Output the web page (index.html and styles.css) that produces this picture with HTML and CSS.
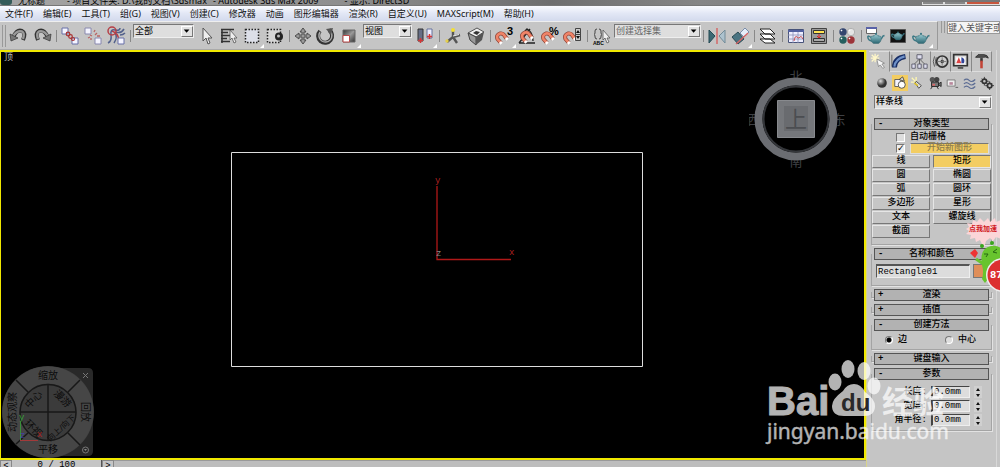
FILE: index.html
```html
<!DOCTYPE html>
<html lang="zh-CN">
<head>
<meta charset="utf-8">
<title>Autodesk 3ds Max 2009</title>
<link rel="stylesheet" href="styles.css">
</head>
<body>
<svg class="defs" width="0" height="0" aria-hidden="true">
  <defs>
    <linearGradient id="steel" x1="0" y1="0" x2="1" y2="1"><stop offset="0" stop-color="#333"/><stop offset=".5" stop-color="#999"/><stop offset="1" stop-color="#333"/></linearGradient>
    <linearGradient id="teal" x1="0" y1="0" x2="0" y2="1"><stop offset="0" stop-color="#8fc3ca"/><stop offset="1" stop-color="#2b6571"/></linearGradient>
    <radialGradient id="ball" cx=".35" cy=".3"><stop offset="0" stop-color="#ddd"/><stop offset="1" stop-color="#333"/></radialGradient>
    <symbol id="magnet" viewBox="0 0 14 14"><path d="M6 12L2.500 8Q1 4 5 2.500Q8 2 9 4L12 8" fill="none" stroke="#8c4033" stroke-width="4"/><path d="M6 12L2.500 8Q1 4 5 2.500Q8 2 9 4L12 8" fill="none" stroke="#f08468" stroke-width="2.600"/><path d="M5 11l1.500 1.700M11 7l1.500 1.700" stroke="#fff" stroke-width="3"/></symbol>
    <symbol id="teapot" viewBox="0 0 18 12"><path d="M4 5Q1 2.500 .8 4.500Q1 8 5 8.500M13 7Q15 6 16 3.500L17.500 3" fill="none" stroke="#3b7985" stroke-width="1.500"/><path d="M4 4Q9 1.500 14 4Q15 9 11.500 11H6.500Q3 9 4 4Z" fill="url(#teal)" stroke="#3b6973" stroke-width=".5"/><path d="M6 3.500Q9 1 12 3.500" fill="#a5d0d5" stroke="#3b6973" stroke-width=".5"/><circle cx="9" cy="1.300" r="1.100" fill="#3b7985"/></symbol>
    <symbol id="down" viewBox="0 0 12 11"><path d="M2 3h7L5.500 7z" fill="#000"/></symbol>
  </defs>
</svg>

<header class="titlebar">
  <span class="app-mark"></span>
  <span class="title-part">无标题</span>
  <span class="title-part path">- 项目文件夹: D:\我的文档\3dsmax</span>
  <span class="title-part">- Autodesk 3ds Max 2009</span>
  <span class="title-part device">- 显示: Direct3D</span>
  <span class="window-buttons"><i></i><i></i><i class="close"></i></span>
</header>

<nav class="menu">
  <a href="#">文件(F)</a><a href="#">编辑(E)</a><a href="#">工具(T)</a><a href="#">组(G)</a><a href="#">视图(V)</a><a href="#">创建(C)</a><a href="#">修改器</a><a href="#">动画</a><a href="#">图形编辑器</a><a href="#">渲染(R)</a><a href="#">自定义(U)</a><a href="#">MAXScript(M)</a><a href="#">帮助(H)</a>
</nav>

<div class="top">
  <div class="toolbar">
    <span class="grip"></span>
    <button aria-label="撤消"><svg viewBox="0 0 20 20"><path d="M4 12Q7 3 13 5Q17 7 14 14" fill="none" stroke="#333" stroke-width="4"/><path d="M4 11Q7 4 13 5.500Q16 7 14 13" fill="none" stroke="#999" stroke-width="2.400"/><path d="M1 8l1 7 7-3z" fill="#777" stroke="#333" stroke-width=".7"/></svg></button>
    <button aria-label="重做"><svg viewBox="0 0 20 20"><path d="M16 12Q13 3 7 5Q3 7 6 14" fill="none" stroke="#333" stroke-width="4"/><path d="M16 11Q13 4 7 5.500Q4 7 6 13" fill="none" stroke="#999" stroke-width="2.400"/><path d="M19 8l-1 7-7-3z" fill="#777" stroke="#333" stroke-width=".7"/></svg></button>
    <span class="sep"></span>
    <button aria-label="选择并链接"><svg viewBox="0 0 20 20"><path d="M2 2h6v6H2zM12 12h6v6h-6z" fill="#f4f4ff" stroke="#6870a8"/><g fill="none" stroke="#a83232" stroke-width="1.200"><circle cx="8" cy="8" r="1.800"/><circle cx="10.500" cy="10.500" r="1.800"/><circle cx="13" cy="13" r="1.500"/></g></svg></button>
    <button aria-label="取消链接"><svg viewBox="0 0 20 20"><path d="M2 2h6v6H2zM12 12h6v6h-6z" fill="#f4f4ff" stroke="#8888ae"/><path d="M7 9l2 1M5 12l2-1M8 14v-2M12 9l2-2M11 6l1-2M14 10h3" stroke="#b86464" stroke-width="1.300"/></svg></button>
    <button aria-label="绑定到空间扭曲"><svg viewBox="0 0 20 20"><path d="M2 17q4-2 3-8t4-5 5-2M8 17q4-6 1-10M10 6q5 2 8-3M14 9q3 0 5-2" fill="none" stroke="#53618c" stroke-width="1.500"/><circle cx="6" cy="5" r="4" fill="none" stroke="#b63f46" stroke-width="1.500"/><path d="M6 5q6 2 7 9" fill="none" stroke="#b63f46" stroke-width="1.500"/><path d="M12 12h6v6h-6z" fill="#f4f4ff" stroke="#6870a8"/></svg></button>
    <span class="sep"></span>
    <label class="combo filter"><select aria-label="选择过滤器"><option>全部</option></select><svg class="arrow"><use href="#down"/></svg></label>
    <button aria-label="选择对象"><svg viewBox="0 0 20 20"><path d="M7 2v13l3-3 2 6 2-1-2-5h4z" fill="#eee" stroke="#555"/></svg></button>
    <button aria-label="按名称选择"><svg viewBox="0 0 20 20"><path d="M2 3.500h13M2 6.500h7M2 9.500h9M2 12.500h6M2 15.500h9M3 3v14" stroke="#333" stroke-width="1.500"/><path d="M11 4v10l2-2 2 5 2-1-2-4h3z" fill="#eee" stroke="#555" stroke-width=".8"/></svg></button>
    <button class="more" aria-label="矩形选择区域"><svg viewBox="0 0 20 20"><path d="M3.500 3.500h13v13h-13z" fill="#dcdfe8" stroke="#222" stroke-width="1.500" stroke-dasharray="1.500 1.500"/></svg></button>
    <button aria-label="窗口/交叉"><svg viewBox="0 0 20 20"><path d="M2.500 3.500h13v13h-13z" fill="#d5d5d5" stroke="#222" stroke-width="1.500" stroke-dasharray="1.500 1.500"/><circle cx="14" cy="10.500" r="4" fill="#222"/><circle cx="13.500" cy="10" r="1.500" fill="#bbb"/></svg></button>
    <span class="sep"></span>
    <button aria-label="选择并移动"><svg viewBox="0 0 20 20"><path d="M10 2l3 4h-2v3h3V7l4 3-4 3v-2h-3v3h2l-3 4-3-4h2v-3H6v2l-4-3 4-3v2h3V6H7z" fill="#999" stroke="#444" stroke-width=".9"/></svg></button>
    <button aria-label="选择并旋转"><svg viewBox="0 0 20 20"><path d="M4 5A7 7 0 1 0 13 4" fill="none" stroke="#333" stroke-width="4"/><path d="M4 6A6.500 6.500 0 1 0 14 5" fill="none" stroke="#aaa" stroke-width="1.500"/><path d="M10 3l7-1-2 7z" fill="#555"/></svg></button>
    <button class="more" aria-label="选择并缩放"><svg viewBox="0 0 20 20"><path d="M4 4h12v12H4z" fill="url(#steel)" stroke="#666"/><path d="M4 9.500h6.500V16H4z" fill="#fff" stroke="#b94b4b"/></svg></button>
    <label class="combo coords"><select aria-label="参考坐标系"><option>视图</option></select><svg class="arrow"><use href="#down"/></svg></label>
    <button class="more" aria-label="使用轴点中心"><svg viewBox="0 0 20 20"><path d="M3 3h5v12H3z" fill="#666e86" stroke="#333"/><path d="M12 3h5v9h-5z" fill="#eef" stroke="#67739c"/><path d="M5.500 12v5M3 14.500h5M14.500 8v5M12 10.500h5" stroke="#d23737" stroke-width="1.500"/></svg></button>
    <span class="sep"></span>
    <button aria-label="选择并操纵"><svg viewBox="0 0 20 20"><path d="M10 4v7L4 16M10 11l7-2M10 11l4 6" stroke="#555" stroke-width="2.400" fill="none"/><circle cx="10" cy="4" r="2" fill="#f4df35"/><circle cx="4" cy="15" r="1.700" fill="#e5cf4b"/><path d="M10 10l6-1.500" stroke="#eee"/></svg></button>
    <button aria-label="键盘快捷键覆盖"><svg viewBox="0 0 20 20"><path d="M2 7l9-5 7 4-8 5z" fill="#eee" stroke="#555"/><path d="M2 7l8 4v8l-6-5z" fill="#999" stroke="#444"/><path d="M10 11l8-5-2 8-6 5z" fill="#555"/><path d="M7 7l3-2 4 1-3 3z" fill="#333"/></svg></button>
    <span class="sep"></span>
    <button class="more" aria-label="三维捕捉"><svg viewBox="0 0 20 20"><use href="#magnet" x="1" y="5" width="14" height="14"/><text x="13" y="9" class="glyph">3</text></svg></button>
    <button aria-label="角度捕捉"><svg viewBox="0 0 20 20"><path d="M2 17h16M2 17L13 3M10 3q6 3 6 12M8 5l2-2 2 2" fill="none" stroke="#222" stroke-width="1.300"/><use href="#magnet" x="3" y="4" width="14" height="14"/></svg></button>
    <button aria-label="百分比捕捉"><svg viewBox="0 0 20 20"><use href="#magnet" x="1" y="5" width="14" height="14"/><text x="9" y="9" class="glyph">%</text></svg></button>
    <button aria-label="微调器捕捉"><svg viewBox="0 0 20 20"><use href="#magnet" x="0" y="5" width="14" height="14"/><path d="M12.500 2.500h5v12h-5zM12.500 8.500h5" fill="#ccc" stroke="#444"/><path d="M13 7l2-3 2 3M13 10l2 3 2-3" fill="#111"/></svg></button>
    <span class="sep"></span>
    <button aria-label="编辑命名选择集"><svg viewBox="0 0 20 20"><path d="M6 3q-2 0-2 2v2q0 1-1 1.500Q4 9 4 10v1q0 2 2 2M8 3q2 0 2 2v2q0 1 1 1.500-1 .5-1 1.500v1q0 2-2 2" fill="none" stroke="#444"/><text x="2" y="19" class="tiny">ABC</text><path d="M12 4v10l2-2 2 5 2-1-2-4h3z" fill="#eee" stroke="#555" stroke-width=".8"/></svg></button>
    <label class="combo sets"><select aria-label="命名选择集"><option>创建选择集</option></select><svg class="arrow"><use href="#down"/></svg></label>
    <span class="sep"></span>
    <button aria-label="镜像"><svg viewBox="0 0 20 20"><path d="M2 4l6 6-6 7z" fill="#3c6873" stroke="#254b55"/><path d="M18 4l-6 6 6 7z" fill="#adc2ce" stroke="#738b98"/><path d="M10 2v16" stroke="#d65959" stroke-width="1.300"/></svg></button>
    <button class="more" aria-label="对齐"><svg viewBox="0 0 20 20"><path d="M10 7l5-5 4 4-5 5z" fill="#e5edf8" stroke="#7a8daa"/><path d="M2 11l6-5 6 7-6 5z" fill="#4a7482" stroke="#2b4b55"/><path d="M6 18L18 7" stroke="#d76262" stroke-width="1.300"/></svg></button>
    <span class="sep"></span>
    <button aria-label="层管理器"><svg viewBox="0 0 20 20"><path d="M2 13h10l5 4H7zM2 8h10l5 5H7zM2 3h10l5 5H7z" fill="#fff" stroke="#222"/></svg></button>
    <span class="sep"></span>
    <button aria-label="曲线编辑器"><svg viewBox="0 0 20 20"><path d="M2.500 3.500h15v13h-15z" fill="#eef" stroke="#465279"/><path d="M2 4h16v2H2z" fill="#5260a0"/><path d="M7 6v11M2 9h15M2 13h15M12 6v11" stroke="#8a91b6" stroke-width=".8"/><path d="M8 15q1-6 3-4t3 0 3 2" fill="none" stroke="#c54c4c"/></svg></button>
    <button aria-label="图解视图"><svg viewBox="0 0 20 20"><path d="M2.500 2.500h15v15h-15z" fill="#999" stroke="#444"/><path d="M4.500 4.500h11v3h-11z" fill="#ffe253" stroke="#333"/><path d="M4.500 12.500h11v3h-11z" fill="#aaa" stroke="#333"/><path d="M10 8v4M8 10l2 2 2-2" stroke="#d22" fill="none"/></svg></button>
    <span class="sep"></span>
    <button aria-label="材质编辑器"><svg viewBox="0 0 20 20"><circle cx="6" cy="6" r="3.700" fill="#34466f"/><circle cx="14" cy="6" r="3.700" fill="#e4e4e4" stroke="#888" stroke-width=".5"/><circle cx="6" cy="14" r="3.700" fill="#255f5e"/><circle cx="14" cy="14" r="3.700" fill="#9d3439"/><path d="M4 5l1-1M12 5l1-1M4 13l1-1M12 13l1-1" stroke="#fff" stroke-width="1.500"/></svg></button>
    <span class="sep"></span>
    <button aria-label="渲染设置"><svg viewBox="0 0 20 20"><path d="M1.500 1.500h10v6h-10z" fill="#fff" stroke="#666"/><path d="M1 1h11v2H1z" fill="#5962a8"/><use href="#teapot" x="2" y="6" width="18" height="13"/></svg></button>
    <button aria-label="渲染帧窗口"><svg viewBox="0 0 20 20"><path d="M2.500 3.500h15v13h-15z" fill="#111" stroke="#555"/><use href="#teapot" x="3" y="5" width="14" height="10"/></svg></button>
    <button class="more" aria-label="快速渲染"><svg viewBox="0 0 20 20"><use href="#teapot" x="1" y="6" width="18" height="13"/></svg></button>
  </div>
  <div class="search"><span class="grip"></span><input aria-label="搜索" value="键入关键字或短语"></div>
</div>

<main class="workspace">
  <div class="stage">
    <section class="viewport" aria-label="顶视图">
      <span class="view-name">顶</span>
      <svg class="shape" viewBox="0 0 412 216">
        <path d="M.5.500h411v214H.5z" fill="none" stroke="#ddd"/>
        <path d="M206 34v73.500H280" fill="none" stroke="#b01818" stroke-width="1.300"/>
        <text x="204" y="31" class="axis">y</text><text x="278" y="103" class="axis">x</text><text x="205" y="104" class="axis dim">z</text>
      </svg>
      <svg class="compass" viewBox="0 0 98 104">
        <g class="compass-letters"><text x="47" y="14">北</text><text x="5" y="57">西</text><text x="90" y="57">东</text><text x="47" y="99">南</text></g>
        <circle cx="47" cy="52" r="37.500" fill="none" stroke="#6b6d72" stroke-width="8"/>
        <circle cx="47" cy="52" r="32.500" fill="none" stroke="#34363a" stroke-width="2"/>
        <path d="M28.500 33.500h37v37h-37z" fill="#75777b" stroke="#888a8e"/>
        <path d="M35 39h24v25H35z" fill="#696b6f"/>
        <text x="47" y="60" class="top-face">上</text>
      </svg>
      <svg class="wheel" viewBox="2 362 96 96">
        <path d="M50 368h38q5 0 5 5v78q0 5-5 5H60z" fill="#292929"/>
        <circle cx="48" cy="412" r="46" fill="#3b3b3b"/>
        <circle cx="48" cy="412" r="37" fill="none" stroke="#464646" stroke-width="17"/>
        <g fill="none" stroke="#181818" stroke-width="1.500"><circle cx="48" cy="412.500" r="28"/><path d="M48 385v56M20 412h56M28 392L16 380M68 392l12-12M28 433l-12 11M68 433l12 12"/></g>
        <g class="wheel-text"><text x="48" y="379">缩放</text><text x="48" y="453">平移</text><text transform="translate(16 412) rotate(-90)">动态观察</text><text transform="translate(82 412) rotate(90)">回放</text><text transform="translate(36 402) rotate(-45)">中心</text><text transform="translate(60 401) rotate(45)">漫游</text><text transform="translate(31 431) rotate(45)">环视</text><text transform="translate(63 430) rotate(-42)" class="updown">向上/向下</text></g>
        <path d="M83 373l5 5M88 373l-5 5" stroke="#777"/><circle cx="85.500" cy="450" r="3" fill="none" stroke="#777"/><path d="M84 449h3l-1.500 2z" fill="#888"/>
        <path d="M20.500 440v-18" stroke="#398f39"/><path d="M20 440.500h18" stroke="#a23a3a"/>
        <text x="19" y="420" class="axis green">y</text><text x="37" y="437" class="axis">x</text><text x="20" y="438" class="axis blue">z</text>
      </svg>
    </section>
    <footer class="timeline"><button aria-label="上一帧">&lt;</button><span class="frame">0 / 100</span><button aria-label="下一帧">&gt;</button><span class="track"></span></footer>
  </div>

  <aside class="panel">
    <div class="tabs">
      <button class="active" aria-label="创建"><svg viewBox="0 0 20 20"><path d="M6 1v10M1 6h10M2 2l8 8M10 2l-8 8" stroke="#fff7c8" stroke-width="1.500"/><path d="M8 7l9 5-3 1 3 4-2 1-3-4-2 2z" fill="#f5f5f5" stroke="#777" stroke-width=".8"/></svg></button>
      <button aria-label="修改"><svg viewBox="0 0 20 20"><path d="M4 17Q4 6 17 4" fill="none" stroke="#172d65" stroke-width="6"/><path d="M4 16Q5 7 16 4" fill="none" stroke="#6f91c8" stroke-width="2.500"/><path d="M1 16V2" stroke="#555"/></svg></button>
      <button aria-label="层次"><svg viewBox="0 0 20 20"><path d="M10 5v9M10 7l-7 7M10 7l7 7" stroke="#555" fill="none"/><path d="M7 2h6v5H7zM1 13h4v5H1zM8 13h4v5H8zM15 13h4v5h-4z" fill="#dde" stroke="#556"/></svg></button>
      <button aria-label="运动"><svg viewBox="0 0 20 20"><circle cx="12" cy="10" r="6.500" fill="#ccc" stroke="#333" stroke-width="2"/><circle cx="12" cy="10" r="2" fill="#222"/><path d="M12 5v10M7 10h10" stroke="#777"/><path d="M3 4q-3 6 0 12M5 5q-2 5 0 10" fill="none" stroke="#444"/></svg></button>
      <button aria-label="显示"><svg viewBox="0 0 20 20"><path d="M2 2h16v13H2z" fill="#ddd" stroke="#333" stroke-width="2"/><path d="M5 5h10v8H5z" fill="#fff"/><path d="M5 12l3-7 3 7z" fill="#d44"/><path d="M11 5q5 1 3 7h-3z" fill="#349"/><path d="M7 17h6v1H7z" stroke="#555"/></svg></button>
      <button aria-label="工具"><svg viewBox="0 0 20 20"><path d="M3 5l3-3h7q4 0 5 4-3-2-6-1H6z" fill="#555" stroke="#222"/><path d="M8.500 6h3v4h-3z" fill="#333"/><path d="M8.500 9h3v9h-3z" fill="#c34335"/></svg></button>
    </div>
    <div class="categories">
      <button aria-label="几何体"><svg viewBox="0 0 16 16"><circle cx="8" cy="8" r="5.500" fill="url(#ball)"/></svg></button>
      <button class="active" aria-label="图形"><svg viewBox="0 0 16 16"><path d="M2 4h7v8H2z" fill="#f4f4ff" stroke="#555"/><circle cx="10" cy="10" r="4" fill="#fff" stroke="#444"/><path d="M7 4l4-3 2 5z" fill="#ddd" stroke="#444"/></svg></button>
      <button aria-label="灯光"><svg viewBox="0 0 16 16"><path d="M2 2l5 5M7 1v4M1 7h4" stroke="#fff8b0" stroke-width="1.500"/><path d="M7 6l6 5-3 3-4-6z" fill="#ddd" stroke="#444"/><path d="M5 8l4 3" stroke="#dbc02e" stroke-width="2"/></svg></button>
      <button aria-label="摄影机"><svg viewBox="0 0 16 16"><circle cx="5" cy="4" r="3" fill="#555"/><circle cx="10" cy="4" r="3" fill="#444"/><path d="M4 7h8v5H4zM12 9l3-2v5l-3-2M5 12l-2 3M10 12l2 3" fill="#777" stroke="#222"/><path d="M5 9h3v2H5z" fill="#d66"/></svg></button>
      <button aria-label="辅助对象"><svg viewBox="0 0 16 16"><path d="M2.500 4.500h9v7h-9z" fill="#eee" stroke="#777"/><path d="M5 7h4v3H5z" fill="#b9879c"/><path d="M12 13h3" stroke="#555"/></svg></button>
      <button aria-label="空间扭曲"><svg viewBox="0 0 16 16"><path d="M1 5q3-3 6 0t7-1M1 9q3-3 6 0t7-1M1 13q3-3 6 0t7-1" fill="none" stroke="#5c6c93" stroke-width="1.300"/></svg></button>
      <button aria-label="系统"><svg viewBox="0 0 16 16"><g fill="none" stroke="#333" stroke-width="2"><circle cx="5" cy="6" r="2.500"/><circle cx="11" cy="11" r="2.500"/></g><path d="M5 1v3M5 8v3M0 6h3M7 6h3M11 6v3M11 13v3M6 11h3M13 11h3M2 3l1 1M7 8l1 1M13 9l1-1" stroke="#333"/></svg></button>
    </div>
    <label class="combo kind"><select aria-label="图形类型"><option>样条线</option></select><svg class="arrow"><use href="#down"/></svg></label>

    <section class="rollout types">
      <button class="head"><b>-</b>对象类型</button>
      <div class="checks">
        <input type="checkbox" id="grid"><label for="grid">自动栅格</label>
        <input type="checkbox" id="start" checked><label for="start" class="new-shape">开始新图形</label>
      </div>
      <div class="kinds"><button>线</button><button class="active">矩形</button><button>圆</button><button>椭圆</button><button>弧</button><button>圆环</button><button>多边形</button><button>星形</button><button>文本</button><button>螺旋线</button><button>截面</button></div>
    </section>
    <section class="rollout named">
      <button class="head"><b>-</b>名称和颜色</button>
      <div class="name-row"><input aria-label="名称" value="Rectangle01"><button class="swatch" aria-label="颜色"></button></div>
    </section>
    <section class="rollout closed"><button class="head"><b>+</b>渲染</button></section>
    <section class="rollout closed"><button class="head"><b>+</b>插值</button></section>
    <section class="rollout">
      <button class="head"><b>-</b>创建方法</button>
      <div class="radios"><label><input type="radio" name="method" checked>边</label><label><input type="radio" name="method">中心</label></div>
    </section>
    <section class="rollout closed"><button class="head"><b>+</b>键盘输入</button></section>
    <section class="rollout">
      <button class="head"><b>-</b>参数</button>
      <div class="params">
        <label for="len">长度:</label><input id="len" value="0.0mm"><span class="spin"><button aria-label="增加长度"></button><button class="dec" aria-label="减少长度"></button></span>
        <label for="wid">宽度:</label><input id="wid" value="0.0mm"><span class="spin"><button aria-label="增加宽度"></button><button class="dec" aria-label="减少宽度"></button></span>
        <label for="rad">角半径:</label><input id="rad" value="0.0mm"><span class="spin"><button aria-label="增加角半径"></button><button class="dec" aria-label="减少角半径"></button></span>
      </div>
    </section>
  </aside>
</main>

<svg class="mascot" viewBox="965 215 35 80">
  <path d="M966 229l3-2-2-4 5 1 1-4 4 2 3-4 4 4 4-4 2 4 5-4 1 4 5-2v19l-5-2-3 4-3-3-4 3-2 7-4-8-4 2-1-4-5 1 1-4-5-1 3-3z" fill="#fbd5d8"/>
  <text x="969" y="231" class="boost">点我加速</text>
  <path d="M970 253l5-4 3 4-3 5z" fill="#e33"/>
  <circle cx="982" cy="246" r="2" fill="#39a51d"/><circle cx="992" cy="243" r="2" fill="#39a51d"/>
  <path d="M982 265q-3-17 9-19 10-2 14 9v24h-17l-3 4-3-4q2-7 0-14z" fill="#68c42e"/>
  <path d="M985 265l-9-6" stroke="#68c42e" stroke-width="3"/>
  <path d="M984 254l4 0-2 3M997 249l-4 3 4 1" fill="none" stroke="#276812"/>
  <circle cx="1003" cy="275" r="17" fill="#eee"/><circle cx="1003" cy="275" r="15.500" fill="#dc3030"/>
  <text x="990" y="278" class="score">87</text>
</svg>

<svg class="watermark" viewBox="765 358 184 88" aria-label="Baidu经验 jingyan.baidu.com">
  <g fill="#fff" opacity=".7">
    <text x="767" y="415" class="bai">Bai</text>
    <ellipse cx="835" cy="382" rx="6.500" ry="8.500"/><ellipse cx="848" cy="369" rx="6.500" ry="9"/><ellipse cx="864" cy="371" rx="6.500" ry="9"/><ellipse cx="874" cy="386" rx="6.500" ry="8.500"/>
    <path d="M854 384q7 0 11 8 10 7 10 14 0 10-11 10h-20q-12 0-12-10 0-7 11-15 4-7 11-7z"/>
    <text x="882" y="413" class="jing">经验</text>
    <text x="767" y="439" class="url">jingyan.baidu.com</text>
  </g>
  <text x="841" y="411" class="du">du</text>
</svg>
</body>
</html>
```

FILE: styles.css
```css
* { box-sizing: border-box; }
body {
  margin: 0;
  height: 100vh;
  overflow: hidden;
  position: relative;
  display: flex;
  flex-direction: column;
  background: #c5c5c5;
  color: #000;
  font: 9px/12px "Noto Sans", "Noto Sans CJK SC", sans-serif;
}
button, input, select { font: inherit; color: inherit; margin: 0; padding: 0; border: 0; border-radius: 0; }
button { background: none; }
.defs { position: absolute; }

.titlebar {
  flex: none;
  height: 5px;
  display: flex;
  align-items: flex-end;
  gap: 6px;
  overflow: hidden;
  background: linear-gradient(90deg, #a5a5a5, #8e8e8e 35%, #6e6e6e 55%, #868686 70%, #777);
}
.title-part { white-space: nowrap; line-height: 9px; }
.path { margin-left: 16px; }
.title-part.device { margin-left: 20px; }
.app-mark { width: 12px; height: 5px; background: #355c59; border-radius: 0 0 3px 3px; }
.window-buttons { margin-left: auto; display: flex; height: 3px; }
.window-buttons i { width: 22px; border: 1px solid #ddd; border-top: 0; background: #888; }
.window-buttons .close { width: 34px; background: #c7563e; }

.menu {
  flex: none;
  height: 16px;
  display: flex;
  align-items: center;
  gap: 10px;
  padding-left: 5px;
  background: linear-gradient(#fafbff, #e2e7f5 50%, #d3daed);
  border-top: 1px solid #777;
}
.menu a { color: #111; text-decoration: none; white-space: nowrap; }

.top { flex: none; display: flex; height: 29px; }
.toolbar {
  flex: none;
  display: flex;
  align-items: center;
  padding: 0 4px 0 2px;
  border-top: 1px solid #eee;
  border-right: 1px solid #999;
  border-bottom: 1px solid #aaa;
}
.toolbar button { width: 23px; height: 24px; padding: 1px; position: relative; }
.toolbar button svg { display: block; width: 20px; height: 20px; overflow: visible; }
.more::after {
  content: "";
  position: absolute;
  right: 0;
  bottom: 0;
  border: 2px solid transparent;
  border-right-color: #fff;
  border-bottom-color: #fff;
}
.grip { flex: none; width: 4px; height: 22px; margin-right: 2px; border: 1px solid #999; border-width: 0 1px; }
.sep { width: 5px; height: 12px; background: linear-gradient(90deg, transparent 2px, #888 2px 3px, transparent 3px); }
.combo {
  display: flex;
  align-items: center;
  background: #dedede;
  border: 1px solid #777;
  border-right-color: #eee;
  border-bottom-color: #eee;
  height: 14px;
}
.combo select { flex: 1; min-width: 0; padding-left: 1px; appearance: none; background: none; }
.arrow { width: 12px; height: 11px; background: #e2e2e2; border: 1px solid #fff; border-right-color: #777; border-bottom-color: #777; pointer-events: none; }
.toolbar .combo { align-self: flex-start; margin-top: 2px; }
.filter { width: 61px; margin-right: 1px; }
.coords { width: 49px; margin: 0 2px; }
.sets { width: 87px; margin-left: 1px; color: #666; }
.glyph { font: bold 11px "Liberation Sans", sans-serif; }
.tiny { font: bold 5px "Liberation Sans", sans-serif; }
.search { flex: 1; min-width: 0; display: flex; padding-left: 3px; }
.search .grip { height: 12px; }
.search input { flex: 1; min-width: 0; height: 13px; background: #f4f4f4; border: 1px solid #999; color: #555; }

.workspace { flex: 1; min-height: 0; display: grid; grid-template-columns: minmax(0, 1fr) 134px; }
.stage { min-height: 0; display: flex; flex-direction: column; }
.viewport { flex: 1; min-height: 0; position: relative; overflow: hidden; background: #000; border: 2px solid #f0e800; border-left-width: 1px; }
.view-name { position: absolute; left: 3px; top: -1px; color: #bbb; }
.shape { position: absolute; width: 412px; height: 216px; left: 50%; top: 50%; margin: -103px 0 0 -202px; }
.axis { fill: #b02020; font: 9px "Liberation Mono", monospace; }
.dim { fill: #888; }
.green { fill: #3ba53b; }
.blue { fill: #4141a5; }
.compass { position: absolute; width: 98px; height: 104px; right: 17px; top: 15px; }
.compass-letters { fill: #3e4044; font-size: 13px; text-anchor: middle; }
.top-face { fill: #4b4d51; font-size: 22px; text-anchor: middle; }
.wheel { position: absolute; left: 1px; bottom: 0; width: 96px; height: 96px; }
.wheel-text { fill: #0c0c0c; font-size: 10px; text-anchor: middle; }
.updown { font-size: 8px; }

.timeline { flex: none; height: 7px; display: flex; overflow: hidden; font-family: "Liberation Mono", "Noto Sans CJK SC", monospace; line-height: 11px; }
.timeline button { width: 12px; height: 12px; line-height: 10px; border: 1px solid #888; }
.frame { width: 90px; text-align: center; border-right: 1px solid #555; }
.track { flex: 1; border-top: 1px solid #999; background: #bdbdbd; }

.panel { display: flex; flex-direction: column; padding: 0 8px 0 4px; border-left: 1px solid #d8d38b; font-family: "Liberation Mono", "Noto Sans CJK SC", monospace; font-weight: 500; box-shadow: inset -3px 0 #c5c5c5, inset -4px 0 #d8d8d8; }
.tabs { display: grid; grid-template-columns: repeat(6, 1fr); height: 20px; margin: 1px 0 0 -2px; }
.tabs button { padding: 1px; border-right: 1px solid #888; border-bottom: 1px solid #ddd; border-top: 1px solid #ddd; }
.tabs .active { border-bottom-color: transparent; }
.tabs svg { display: block; width: 17px; height: 17px; margin: auto; }
.categories { display: flex; justify-content: space-between; height: 16px; margin: 4px -3px 4px 3px; }
.categories button { width: 16px; padding: 1px; }
.categories .active { background: #f3cd62; }
.categories svg { display: block; width: 14px; height: 14px; }
.panel .kind { margin: 0 0 9px 3px; }

.rollout { position: relative; padding: 0 3px 5px; margin-bottom: 3px; }
.rollout::before { content: ""; position: absolute; inset: 6px 0 0; border: 1px solid #a4a4a4; border-top: 0; box-shadow: 1px 1px #e2e2e2; pointer-events: none; }
.rollout > * { position: relative; }
.rollout.types { padding-bottom: 6px; }
.rollout.named { padding-bottom: 6px; }
.rollout .head { display: block; width: 100%; height: 12px; line-height: 10px; background: #b2b2b2; border: 1px solid #555; text-align: center; }
.rollout .head b { float: left; width: 0; padding-left: 3px; margin-right: -3px; }
.rollout.closed { padding-bottom: 0; }
.rollout.closed::before { inset: 3px 0; }
.checks { display: grid; grid-template-columns: 12px 1fr; column-gap: 2px; row-gap: 1px; align-items: center; padding: 2px 0 1px 22px; line-height: 10px; }
.checks input { appearance: none; width: 9px; height: 9px; background: #ddd; border: 1px solid #777; border-right-color: #fff; border-bottom-color: #fff; }
.checks input:checked { background: #eee; }
.checks input:checked::before { content: "✓"; display: block; font: bold 9px/7px "DejaVu Sans", sans-serif; }
.new-shape { background: #f3cd62; color: #8c7b4b; text-align: center; border: 1px solid #ddd; border-top-color: #777; line-height: 9px; }
.kinds { display: grid; grid-template-columns: 1fr 1fr; grid-auto-rows: 13px; gap: 1px 3px; margin: 0 -2px; padding-bottom: 1px; }
.kinds button { line-height: 11px; border: 1px solid #e6e6e6; border-right-color: #777; border-bottom-color: #777; }
.kinds .active { background: #f3cd62; border-color: #777 #e6e6e6 #e6e6e6 #777; }
.name-row { display: flex; gap: 3px; padding: 4px 0 2px 2px; }
.name-row input { flex: 1; min-width: 0; height: 14px; padding-left: 1px; background: #dcdcdc; border: 2px solid #555; border-right: 1px solid #eee; border-bottom: 1px solid #eee; border-left-width: 1px; }
.swatch { width: 16px; background: #df8e59; border: 1px solid #777; }
.radios { display: grid; grid-template-columns: 60px 1fr; padding: 4px 0 0 11px; }
.radios label { display: flex; align-items: center; gap: 5px; line-height: 10px; }
.radios input { appearance: none; width: 8px; height: 8px; border: 1px solid #777; border-right-color: #fff; border-bottom-color: #fff; border-radius: 50%; background: #ddd; }
.radios input:checked { background: radial-gradient(#000 2px, #ddd 3px); }
.params { display: grid; grid-template-columns: 1fr 39px 8px; gap: 2px 4px; padding: 6px 7px 0 0; text-align: right; }
.params input { min-width: 0; height: 12px; padding-left: 1px; background: #ddd; border: 1px solid #eee; border-top-color: #444; border-left: 2px solid #444; }
.spin { display: grid; grid-template-rows: 6px 6px; }
.spin button { display: grid; place-items: center; background: #d0d0d0; }
.spin button::before { content: ""; border: 2px solid transparent; border-top: 0; border-bottom: 3px solid #111; }
.spin .dec::before { border-top: 3px solid #111; border-bottom: 0; }

.mascot { position: absolute; right: 0; top: 215px; width: 35px; height: 80px; }
.boost { fill: #d01822; font: bold 7px "Noto Sans CJK SC", sans-serif; }
.score { fill: #fff; font: bold 9px "DejaVu Sans", sans-serif; }
.watermark { position: absolute; right: 51px; bottom: 21px; width: 184px; height: 88px; pointer-events: none; }
.bai { font: bold 40px "Liberation Sans", sans-serif; stroke: #fff; stroke-width: 1px; }
.jing { font: bold 31px "Noto Sans CJK SC", sans-serif; }
.du { fill: #292929; font: bold 24px "Liberation Sans", sans-serif; }
.url { font: 21px "Noto Sans", sans-serif; stroke: #fff; stroke-width: 0.4px; }
```
